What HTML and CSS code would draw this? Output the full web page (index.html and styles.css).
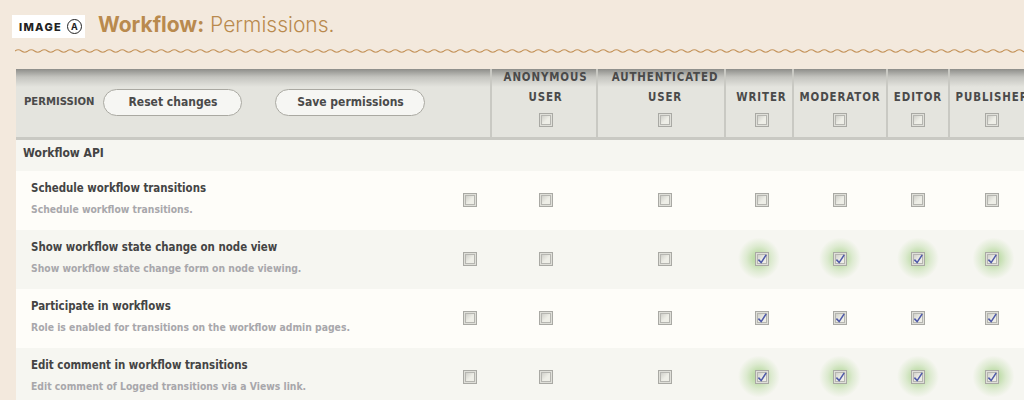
FILE: index.html
```html
<!DOCTYPE html>
<html lang="en">
<head>
    <meta charset="UTF-8">
    <meta name="viewport" content="width=device-width, initial-scale=1.0">
    <title>Workflow: Permissions.</title>
    <link rel="stylesheet" href="styles.css">
</head>
<body>
    <header class="page-head">
        <div class="badge">
            <span>IMAGE</span>
            <span class="badge-letter">A</span>
        </div>
        <h1><strong>Workflow:</strong> Permissions.</h1>
    </header>

    <svg class="wave" width="1009" height="4" aria-hidden="true">
        <defs>
            <pattern id="wave" width="13" height="4" patternUnits="userSpaceOnUse">
                <path d="M0 2 Q3.25 -0.5 6.5 2 T13 2" fill="none" stroke="#c4935a" stroke-width="1.2"/>
            </pattern>
        </defs>
        <rect width="1009" height="4" fill="url(#wave)"/>
    </svg>

    <table class="perms">
        <colgroup>
            <col class="col-name">
            <col class="col-first">
            <col class="col-anon">
            <col class="col-auth">
            <col class="col-writer">
            <col class="col-mod">
            <col class="col-editor">
            <col class="col-pub">
        </colgroup>
        <thead>
            <tr>
                <th class="th-main" colspan="2">
                    <div class="th-actions">
                        <span class="th-label">PERMISSION</span>
                        <button class="btn btn-reset" type="button">Reset changes</button>
                        <button class="btn btn-save" type="button">Save permissions</button>
                    </div>
                </th>
                <th><div class="role">ANONYMOUS<br>USER</div><span class="check"></span></th>
                <th><div class="role">AUTHENTICATED<br>USER</div><span class="check"></span></th>
                <th><div class="role">WRITER</div><span class="check"></span></th>
                <th><div class="role">MODERATOR</div><span class="check"></span></th>
                <th><div class="role">EDITOR</div><span class="check"></span></th>
                <th><div class="role">PUBLISHER</div><span class="check"></span></th>
            </tr>
        </thead>
        <tbody>
            <tr class="group">
                <td colspan="8">Workflow API</td>
            </tr>
            <tr class="odd">
                <td class="name"><b>Schedule workflow transitions</b><small>Schedule workflow transitions.</small></td>
                <td><span class="check"></span></td>
                <td><span class="check"></span></td>
                <td><span class="check"></span></td>
                <td><span class="check"></span></td>
                <td><span class="check"></span></td>
                <td><span class="check"></span></td>
                <td><span class="check"></span></td>
            </tr>
            <tr class="even">
                <td class="name"><b>Show workflow state change on node view</b><small>Show workflow state change form on node viewing.</small></td>
                <td><span class="check"></span></td>
                <td><span class="check"></span></td>
                <td><span class="check"></span></td>
                <td class="lit"><span class="check"><svg viewBox="0 0 10 10"><path d="M2 5.5 L4.3 8 L8.5 1.5"/></svg></span></td>
                <td class="lit"><span class="check"><svg viewBox="0 0 10 10"><path d="M2 5.5 L4.3 8 L8.5 1.5"/></svg></span></td>
                <td class="lit"><span class="check"><svg viewBox="0 0 10 10"><path d="M2 5.5 L4.3 8 L8.5 1.5"/></svg></span></td>
                <td class="lit"><span class="check"><svg viewBox="0 0 10 10"><path d="M2 5.5 L4.3 8 L8.5 1.5"/></svg></span></td>
            </tr>
            <tr class="odd">
                <td class="name"><b>Participate in workflows</b><small>Role is enabled for transitions on the workflow admin pages.</small></td>
                <td><span class="check"></span></td>
                <td><span class="check"></span></td>
                <td><span class="check"></span></td>
                <td><span class="check"><svg viewBox="0 0 10 10"><path d="M2 5.5 L4.3 8 L8.5 1.5"/></svg></span></td>
                <td><span class="check"><svg viewBox="0 0 10 10"><path d="M2 5.5 L4.3 8 L8.5 1.5"/></svg></span></td>
                <td><span class="check"><svg viewBox="0 0 10 10"><path d="M2 5.5 L4.3 8 L8.5 1.5"/></svg></span></td>
                <td><span class="check"><svg viewBox="0 0 10 10"><path d="M2 5.5 L4.3 8 L8.5 1.5"/></svg></span></td>
            </tr>
            <tr class="even">
                <td class="name"><b>Edit comment in workflow transitions</b><small>Edit comment of Logged transitions via a Views link.</small></td>
                <td><span class="check"></span></td>
                <td><span class="check"></span></td>
                <td><span class="check"></span></td>
                <td class="lit"><span class="check"><svg viewBox="0 0 10 10"><path d="M2 5.5 L4.3 8 L8.5 1.5"/></svg></span></td>
                <td class="lit"><span class="check"><svg viewBox="0 0 10 10"><path d="M2 5.5 L4.3 8 L8.5 1.5"/></svg></span></td>
                <td class="lit"><span class="check"><svg viewBox="0 0 10 10"><path d="M2 5.5 L4.3 8 L8.5 1.5"/></svg></span></td>
                <td class="lit"><span class="check"><svg viewBox="0 0 10 10"><path d="M2 5.5 L4.3 8 L8.5 1.5"/></svg></span></td>
            </tr>
        </tbody>
    </table>
</body>
</html>
```
FILE: styles.css
```css
html, body {
    height: 400px;
    overflow: hidden;
}
body {
    margin: 0;
    background-color: #f3e9dd;
    font-family: "DejaVu Sans Condensed", "DejaVu Sans", sans-serif;
    font-stretch: condensed;
    color: #444;
}
.page-head {
    display: flex;
    align-items: center;
    gap: 13px;
    padding: 13px 0 0 12px;
    height: 27px;
}
.badge {
    display: flex;
    align-items: center;
    gap: 5px;
    width: 73px;
    height: 23px;
    box-sizing: border-box;
    padding-left: 7px;
    background-color: #fff;
    font-family: Inter, sans-serif;
    font-stretch: normal;
    font-size: 11px;
    font-weight: 800;
    letter-spacing: 1.3px;
    color: #222;
}
.badge-letter {
    width: 13px;
    height: 13px;
    border: 1.5px solid #222;
    border-radius: 50%;
    font-size: 9px;
    font-weight: 700;
    letter-spacing: 0;
    line-height: 13px;
    text-align: center;
}
h1 {
    margin: -4px 0 0;
    font-family: Inter, sans-serif;
    font-stretch: normal;
    font-size: 21px;
    font-weight: 300;
    color: #b98a4e;
}
h1 strong {
    font-weight: 700;
}
.wave {
    display: block;
    margin: 9px 0 0 15px;
}
.perms {
    width: 1022px;
    margin: 16px 0 0 16px;
    border-collapse: collapse;
    table-layout: fixed;
}
.col-name { width: 434px; }
.col-first { width: 41px; }
.col-anon { width: 106px; }
.col-auth { width: 128px; }
.col-writer { width: 68px; }
.col-mod { width: 94px; }
.col-editor { width: 62px; }
.col-pub { width: 89px; }
thead tr {
    background: linear-gradient(#8d8d89, #c4c4bf 8px, #e4e4de 18px);
}
th {
    height: 58px;
    padding: 0 0 10px;
    border-left: 2px solid #c9c9c3;
    border-bottom: 3px solid #c9c9c3;
    vertical-align: bottom;
    font-size: 11.4px;
    font-weight: 700;
    line-height: 20px;
    letter-spacing: 0.9px;
    color: #4a4a4a;
    text-align: center;
    white-space: nowrap;
}
th.th-main {
    border-left: 0;
    padding: 0 0 2px 8px;
    vertical-align: middle;
    text-align: left;
}
th .check {
    display: block;
    margin: 0 auto;
}
.th-actions {
    display: flex;
    align-items: center;
    gap: 9px;
}
.th-label {
    font-size: 11.2px;
    letter-spacing: 0;
}
.btn {
    height: 27px;
    padding: 0;
    border: 1px solid #aaa9a2;
    border-radius: 14px;
    background-color: #f6f6f3;
    font-family: inherit;
    font-stretch: inherit;
    font-size: 12px;
    font-weight: 700;
    color: #4a4a4a;
}
.btn-reset {
    width: 139px;
}
.btn-save {
    width: 150px;
    margin-left: 24px;
}
.role {
    margin: -2px 0 6px;
}
td {
    box-sizing: border-box;
    padding: 0 0 2px;
    text-align: center;
}
/* the role columns sit a little off centre in the original */
thead th:nth-child(2), tbody td:nth-child(3) { padding-left: 3px; }
thead th:nth-child(3), tbody td:nth-child(4) { padding-left: 8px; }
thead th:nth-child(4), tbody td:nth-child(5) { padding-left: 5px; }
thead th:nth-child(7), tbody td:nth-child(8) { padding-right: 4px; }
tbody td:nth-child(2) { padding-right: 2px; }
.group td {
    height: 32px;
    padding: 0 0 4px 7px;
    background-color: #f6f6f1;
    font-size: 12px;
    font-weight: 700;
    text-align: left;
}
.odd td {
    height: 59px;
    background-color: #fefdf9;
}
.even td {
    height: 59px;
    background-color: #f6f6f1;
}
td.name {
    padding: 0 0 5px 15px;
    text-align: left;
}
td.lit {
    background-image: radial-gradient(circle 21px at 50% calc(50% - 1px), #bedca8 25%, rgba(190, 220, 168, 0.45) 60%, rgba(190, 220, 168, 0) 100%);
}
.name b {
    display: block;
    font-size: 11.4px;
    line-height: 16px;
}
.name small {
    display: block;
    margin-top: 6px;
    font-size: 10.3px;
    font-weight: 700;
    line-height: 14px;
    color: #a8a7ab;
}
.check {
    display: inline-block;
    width: 14px;
    height: 14px;
    box-sizing: border-box;
    border: 1px solid #a9a9a4;
    background: linear-gradient(135deg, #c4c4bf, #eeeee7 55%);
    box-shadow: inset 0 0 0 1px #dfdfd9, inset 0 0 0 2px #b6b6b1;
    vertical-align: middle;
}
.check svg {
    display: block;
    width: 12px;
    height: 12px;
    fill: none;
    stroke: #4f5aa8;
    stroke-width: 1.3;
}
```
